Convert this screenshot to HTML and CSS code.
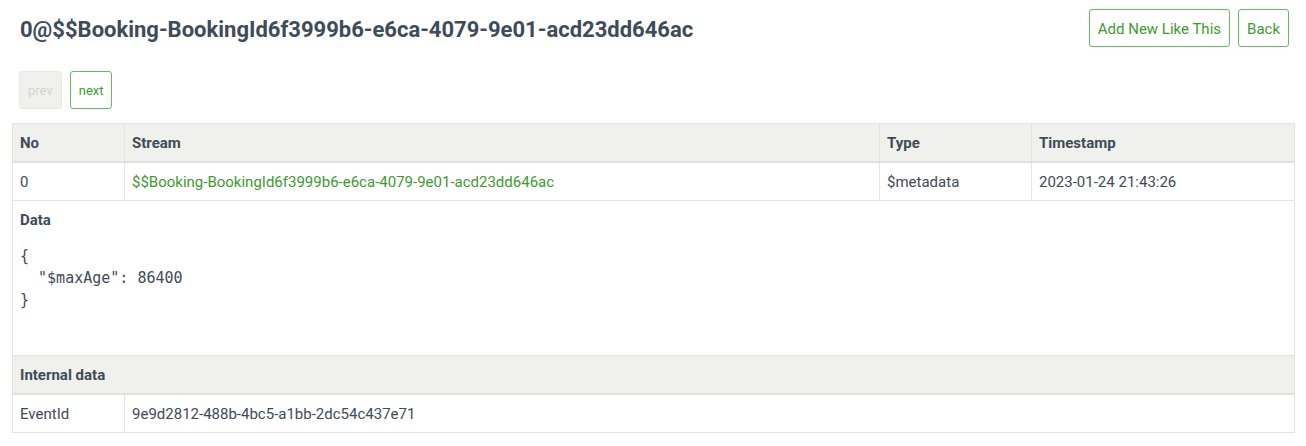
FILE: index.html
```html
<!DOCTYPE html>
<html>
<head>
<meta charset="utf-8">
<link rel="stylesheet" href="styles.css">
</head>
<body>
<div class="page">
  <div class="header">
    <h1 class="title">0@$$Booking-BookingId6f3999b6-e6ca-4079-9e01-acd23dd646ac</h1>
    <div class="actions">
      <a class="btn">Add New Like This</a>
      <a class="btn">Back</a>
    </div>
  </div>
  <div class="pager">
    <span class="btn btn-sm disabled">prev</span>
    <a class="btn btn-sm">next</a>
  </div>
  <table class="events">
    <colgroup>
      <col class="c-no"><col class="c-stream"><col class="c-type"><col class="c-ts">
    </colgroup>
    <thead>
      <tr><th>No</th><th>Stream</th><th>Type</th><th>Timestamp</th></tr>
    </thead>
    <tbody>
      <tr><td>0</td><td><a class="link">$$Booking-BookingId6f3999b6-e6ca-4079-9e01-acd23dd646ac</a></td><td>$metadata</td><td>2023-01-24 21:43:26</td></tr>
      <tr><td colspan="4" class="data-cell"><div class="label">Data</div><pre class="json">{
  "$maxAge": 86400
}</pre></td></tr>
      <tr class="subhead"><th colspan="4">Internal data</th></tr>
      <tr><td>EventId</td><td colspan="3">9e9d2812-488b-4bc5-a1bb-2dc54c437e71</td></tr>
    </tbody>
  </table>
</div>
</body>
</html>
```

FILE: styles.css
```css
html, body {
  margin: 0;
  padding: 0;
  background: #ffffff;
}
body {
  font-family: Roboto, "Liberation Sans", sans-serif;
  font-size: 15px;
  color: #3e4b59;
}
.page {
  padding: 9px 11px 0 12px;
}
.header {
  display: flex;
  justify-content: space-between;
  align-items: center;
  padding: 0 6px 0 8px;
}
.title {
  margin: 4px 0 0 0;
  font-size: 22px;
  font-weight: 700;
  color: #3e4b59;
  line-height: 1.2;
}
.actions {
  display: flex;
  gap: 8px;
}
.btn {
  display: inline-block;
  box-sizing: border-box;
  height: 38px;
  line-height: 34px;
  padding: 2px 8px 0 8px;
  border: 1px solid #66bb5e;
  border-radius: 3px;
  color: #3c9b2e;
  background: #fff;
  font-size: 15px;
  text-decoration: none;
}
.pager {
  display: flex;
  gap: 8px;
  margin-top: 24px;
  padding-left: 7px;
}
.btn-sm {
  font-size: 13px;
  padding: 2px 8px 0 8px;
}
.btn.disabled {
  background: #f0f1ed;
  border-color: #e7e8e4;
  color: #d2d4cf;
}
.events {
  margin-top: 14px;
  width: 100%;
  border-collapse: collapse;
  table-layout: fixed;
}
.c-no { width: 112px; }
.c-stream { width: 755px; }
.c-type { width: 152px; }
.events th, .events td {
  border: 1px solid #e3e4e1;
  padding: 9px 7px 7px 7px;
  text-align: left;
  line-height: 21px;
  font-size: 15px;
}
.events th {
  background: #f0f1ed;
  font-weight: 700;
  color: #3e4b59;
}
.events thead th, .subhead th {
  border-bottom: 2px solid #e0e1dd;
}
.link {
  color: #3c9b2e;
  text-decoration: none;
}
.data-cell {
  height: 138px;
  vertical-align: top;
}
.label {
  font-weight: 700;
}
.json {
  margin: 14px 0 0 0;
  font-family: "DejaVu Sans Mono", monospace;
  font-size: 15px;
  line-height: 22px;
  color: #3e4b59;
}
```
